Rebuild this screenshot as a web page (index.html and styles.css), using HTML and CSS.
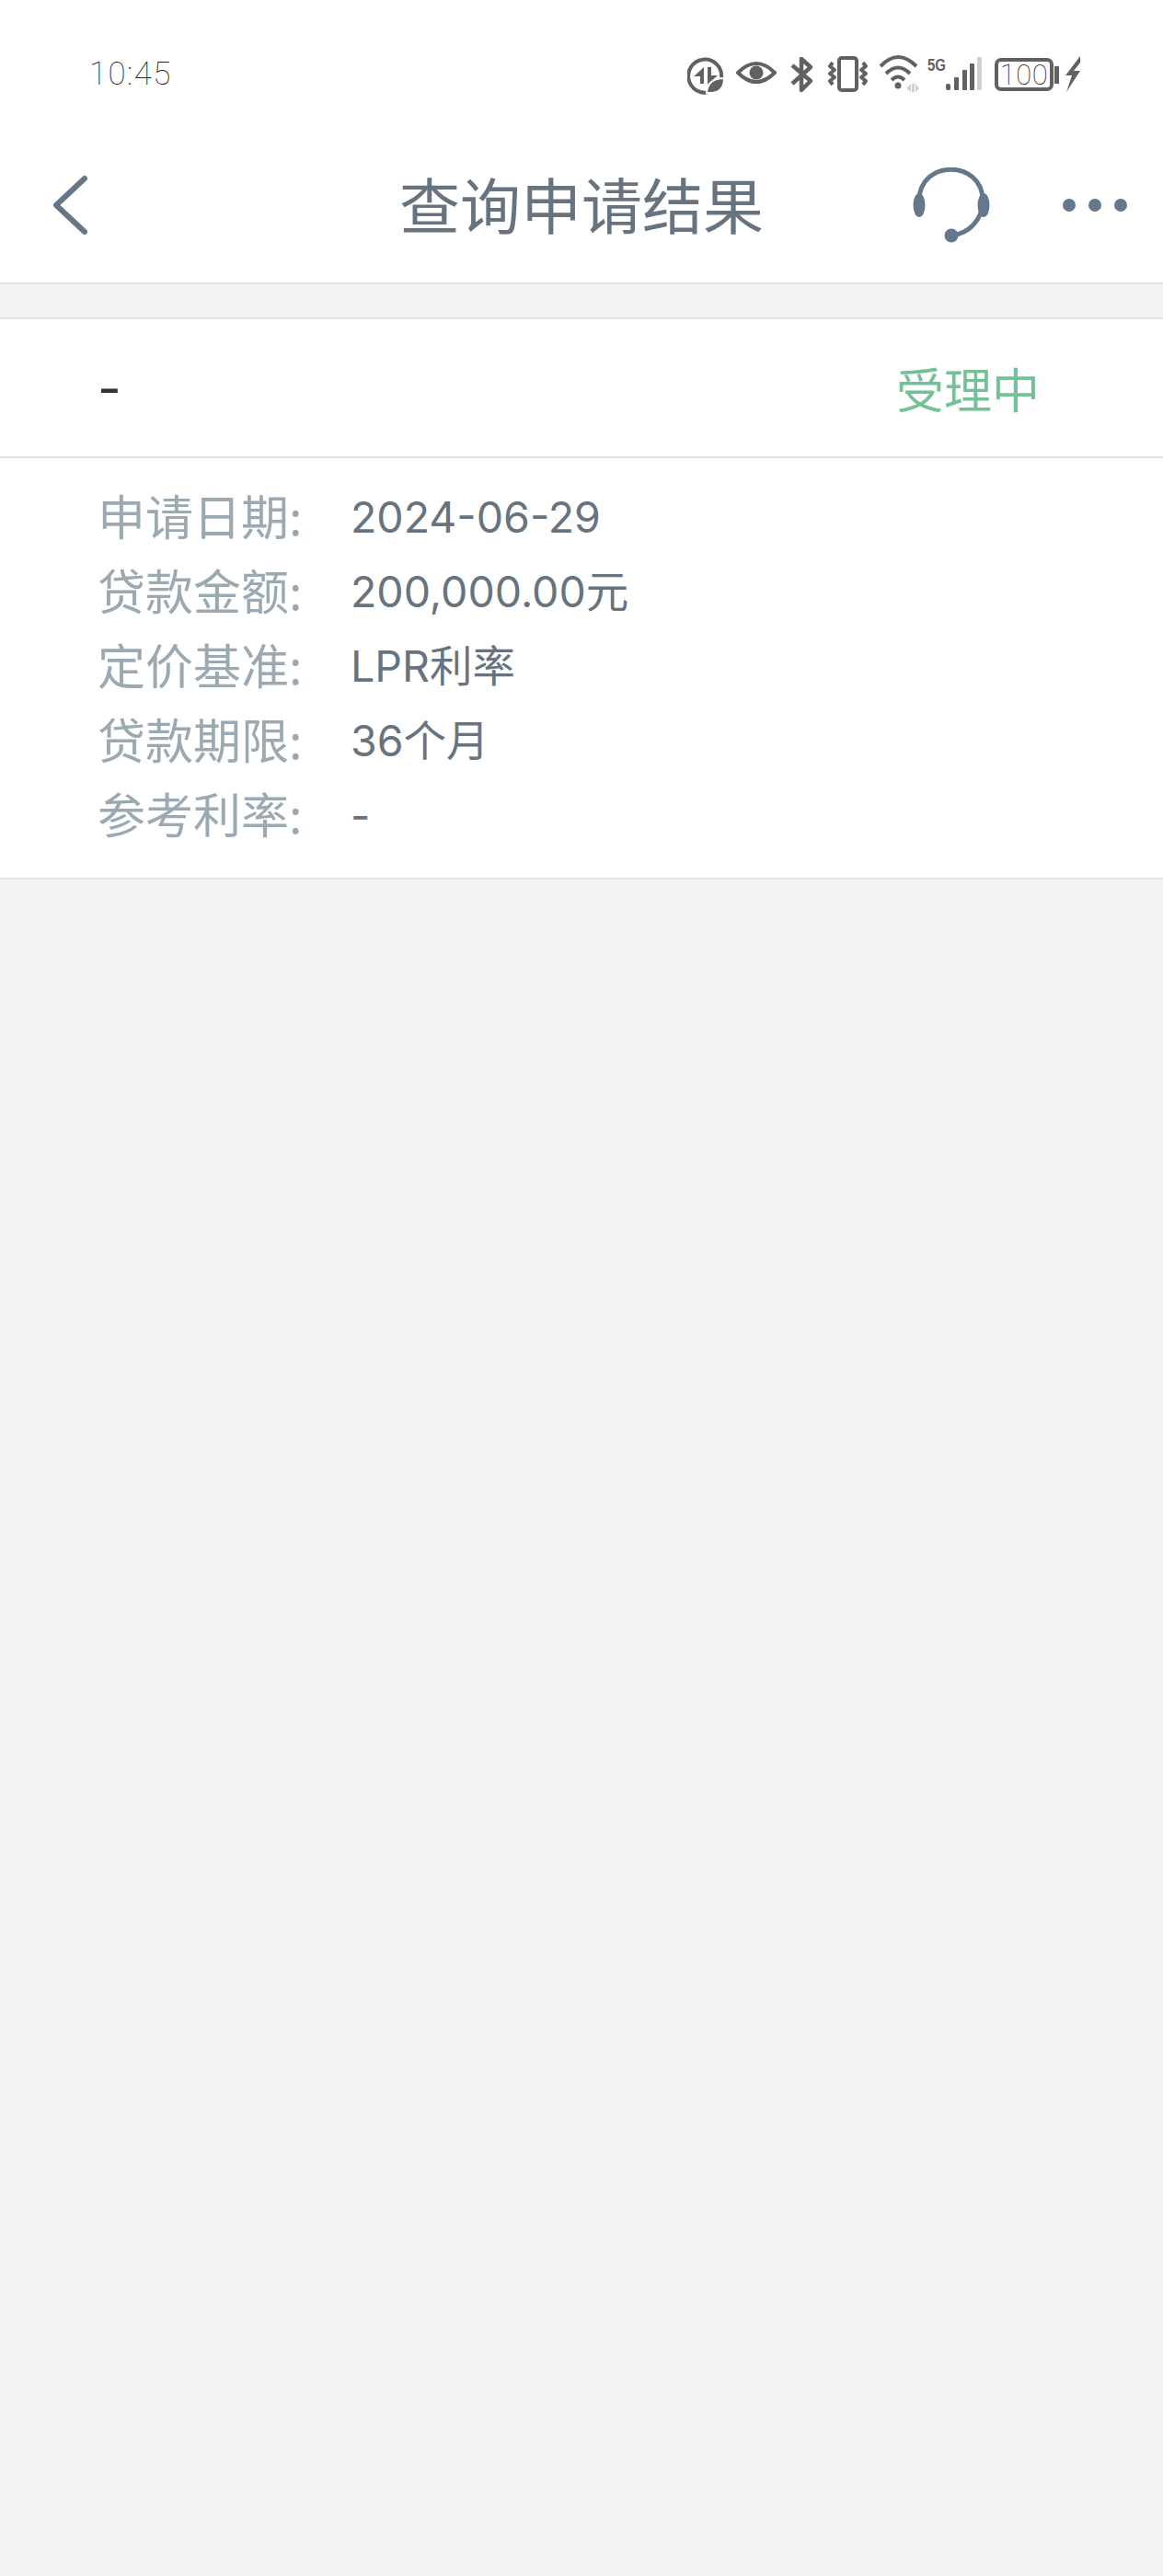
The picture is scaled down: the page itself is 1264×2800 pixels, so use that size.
FILE: index.html
```html
<!DOCTYPE html>
<html lang="zh-CN">
<head>
    <meta charset="UTF-8">
    <meta name="viewport" content="width=device-width, initial-scale=1.0">
    <title>查询申请结果</title>
    <link rel="stylesheet" href="styles.css">
</head>
<body>
    <div class="status-bar">
        <span class="time">10:45</span>
        <svg class="status-icons" width="430" height="48" viewBox="747 56 430 48">
            <!-- data saver -->
            <path class="ic-line" d="M777 96 A18 18 0 1 1 784 84" />
            <path class="ic-fill" d="M765 72 v18 h-4 v-8 h-7z M769 72 h4 v9 h7 l-11 10z" />
            <path class="ic-leaf" d="M768 100 q1 -16 19 -16 q0 16 -15 16z" />
            <!-- eye -->
            <path class="ic-line" d="M802 78 q20 -20 40 0 q-20 20 -40 0z" />
            <circle class="ic-fill" cx="822" cy="78" r="7.5" />
            <!-- bluetooth -->
            <path class="ic-line thick" d="M861 70 L881 87 L871 97 V63 L881 72 L861 90" />
            <!-- vibrate -->
            <rect class="ic-line" x="912" y="62" width="19" height="35" rx="3" />
            <path class="ic-line" d="M905 67 l-3 4 l5 4 l-5 4 l5 4 l-5 4 l3 4" />
            <path class="ic-line" d="M938 67 l3 4 l-5 4 l5 4 l-5 4 l5 4 l-3 4" />
            <!-- wifi -->
            <path class="ic-line" d="M957 71 q19 -20 39 0" />
            <path class="ic-line" d="M963 79 q13 -13 26 0" />
            <path class="ic-line" d="M969 86 q7 -7 14 0" />
            <circle class="ic-fill" cx="976" cy="92" r="3.5" />
            <path class="ic-pale" d="M985 95 l5 -5 v9z M991 90 h3 v9 h-3z M995 90 l4 5 l-4 4z" />
            <!-- 5g signal -->
            <text class="ic-5g" x="1008" y="76" textLength="20" lengthAdjust="spacingAndGlyphs">5G</text>
            <rect class="ic-fill" x="1028" y="90" width="5" height="7" rx="2" />
            <rect class="ic-fill" x="1037" y="83" width="5" height="14" rx="1" />
            <rect class="ic-fill" x="1046" y="75" width="5" height="22" rx="1" />
            <rect class="ic-fill" x="1054" y="68" width="5" height="29" rx="1" />
            <rect class="ic-pale" x="1062" y="61" width="5" height="36" rx="1" />
            <!-- battery -->
            <rect class="ic-line" x="1083" y="64" width="60" height="32" rx="5" />
            <text class="ic-battery" x="1113" y="91">100</text>
            <rect class="ic-fill" x="1146" y="71" width="5" height="19" />
            <path class="ic-fill" d="M1174 60 l-16 21 h7 l-6 18 l15 -23 h-7 l7 -9z" />
        </svg>
    </div>

    <div class="nav-bar">
        <div class="nav-left">
            <svg width="40" height="67" viewBox="0 0 40 67">
                <path class="nav-line" d="M35 4 L4 33 L35 62" />
            </svg>
        </div>
        <div class="nav-title">查询申请结果</div>
        <div class="nav-right">
            <svg width="86" height="82" viewBox="0 0 86 82">
                <path class="nav-line thin" d="M7 36 C7 -9 76 -9 76 36 C76 58 60 72 42 74" />
                <ellipse class="nav-fill" cx="7" cy="41" rx="6.5" ry="13" />
                <ellipse class="nav-fill" cx="77" cy="41" rx="6.5" ry="13" />
                <circle class="nav-fill" cx="42" cy="74" r="7.5" />
            </svg>
            <div class="more-dots">
                <span></span>
                <span></span>
                <span></span>
            </div>
        </div>
    </div>

    <div class="gap"></div>

    <div class="card-head">
        <span class="card-name">-</span>
        <span class="card-status">受理中</span>
    </div>

    <div class="card-body">
        <div class="row"><span class="row-label">申请日期:</span><span class="row-value">2024-06-29</span></div>
        <div class="row"><span class="row-label">贷款金额:</span><span class="row-value">200,000.00元</span></div>
        <div class="row"><span class="row-label">定价基准:</span><span class="row-value">LPR利率</span></div>
        <div class="row"><span class="row-label">贷款期限:</span><span class="row-value">36个月</span></div>
        <div class="row"><span class="row-label">参考利率:</span><span class="row-value">-</span></div>
    </div>
</body>
</html>
```

FILE: styles.css
```css
:root {
    --bg-color: #f3f3f3;
    --line-color: #e2e2e2;
    --icon-color: #63788a;
    --status-color: #616161;
    --label-color: #9aa9b2;
    --value-color: #67747f;
}

body {
    font-family: "Noto Sans CJK SC", "Noto Sans", sans-serif;
    margin: 0;
    padding: 0;
    background-color: var(--bg-color);
}

.status-bar {
    display: flex;
    justify-content: space-between;
    align-items: center;
    height: 139px;
    padding: 57px 87px 34px 97px;
    box-sizing: border-box;
    background-color: #ffffff;
}

.time {
    font-family: Roboto, sans-serif;
    font-size: 35px;
    font-weight: 100;
    line-height: 48px;
    letter-spacing: 1.4px;
    color: #222222;
}

.status-icons {
    display: block;
}

.ic-line {
    fill: none;
    stroke: var(--status-color);
    stroke-width: 4;
    stroke-linejoin: round;
}

.ic-line.thick {
    stroke-width: 4.5;
}

.ic-fill {
    fill: var(--status-color);
}

.ic-leaf {
    fill: var(--status-color);
    stroke: #ffffff;
    stroke-width: 2;
}

.ic-pale {
    fill: #d0d0d0;
}

.ic-5g {
    font-family: "Liberation Sans", sans-serif;
    font-size: 19px;
    font-weight: bold;
    fill: var(--status-color);
}

.ic-battery {
    font-family: Roboto, sans-serif;
    font-size: 31px;
    font-weight: 100;
    letter-spacing: 0.5px;
    text-anchor: middle;
    fill: #222222;
}

.nav-bar {
    display: grid;
    grid-template-columns: 1fr auto 1fr;
    align-items: center;
    height: 170px;
    box-sizing: border-box;
    background-color: #ffffff;
    border-bottom: 2px solid var(--line-color);
}

.nav-left {
    padding-left: 57px;
}

.nav-left svg,
.nav-right svg {
    display: block;
}

.nav-line {
    fill: none;
    stroke: var(--icon-color);
    stroke-width: 6;
    stroke-linecap: round;
    stroke-linejoin: round;
}

.nav-line.thin {
    stroke-width: 5;
}

.nav-fill {
    fill: var(--icon-color);
}

.nav-title {
    font-size: 66px;
    line-height: 84px;
    padding-bottom: 6px;
    color: var(--value-color);
}

.nav-right {
    display: flex;
    justify-content: flex-end;
    align-items: center;
    gap: 77px;
    padding-right: 39px;
}

.more-dots {
    display: flex;
    gap: 14px;
}

.more-dots span {
    width: 14px;
    height: 14px;
    border-radius: 50%;
    background-color: var(--icon-color);
}

.gap {
    height: 36px;
}

.card-head {
    display: flex;
    justify-content: space-between;
    align-items: center;
    height: 153px;
    padding: 0 134px 0 106px;
    box-sizing: border-box;
    background-color: #ffffff;
    border-top: 2px solid var(--line-color);
    border-bottom: 2px solid var(--line-color);
}

.card-name {
    font-family: Inter, sans-serif;
    font-size: 56px;
    color: #333333;
}

.card-status {
    font-size: 52px;
    line-height: 72px;
    color: #73c296;
}

.card-body {
    padding: 24px 0 27px 106px;
    background-color: #ffffff;
    border-bottom: 2px solid var(--line-color);
}

.row {
    display: flex;
    height: 81px;
    line-height: 81px;
}

.row-label {
    width: 275px;
    font-size: 52px;
    line-height: 75px;
    color: var(--label-color);
}

.row-value {
    font-family: Inter, "Noto Sans CJK SC", sans-serif;
    font-size: 46.5px;
    color: var(--value-color);
}
```
